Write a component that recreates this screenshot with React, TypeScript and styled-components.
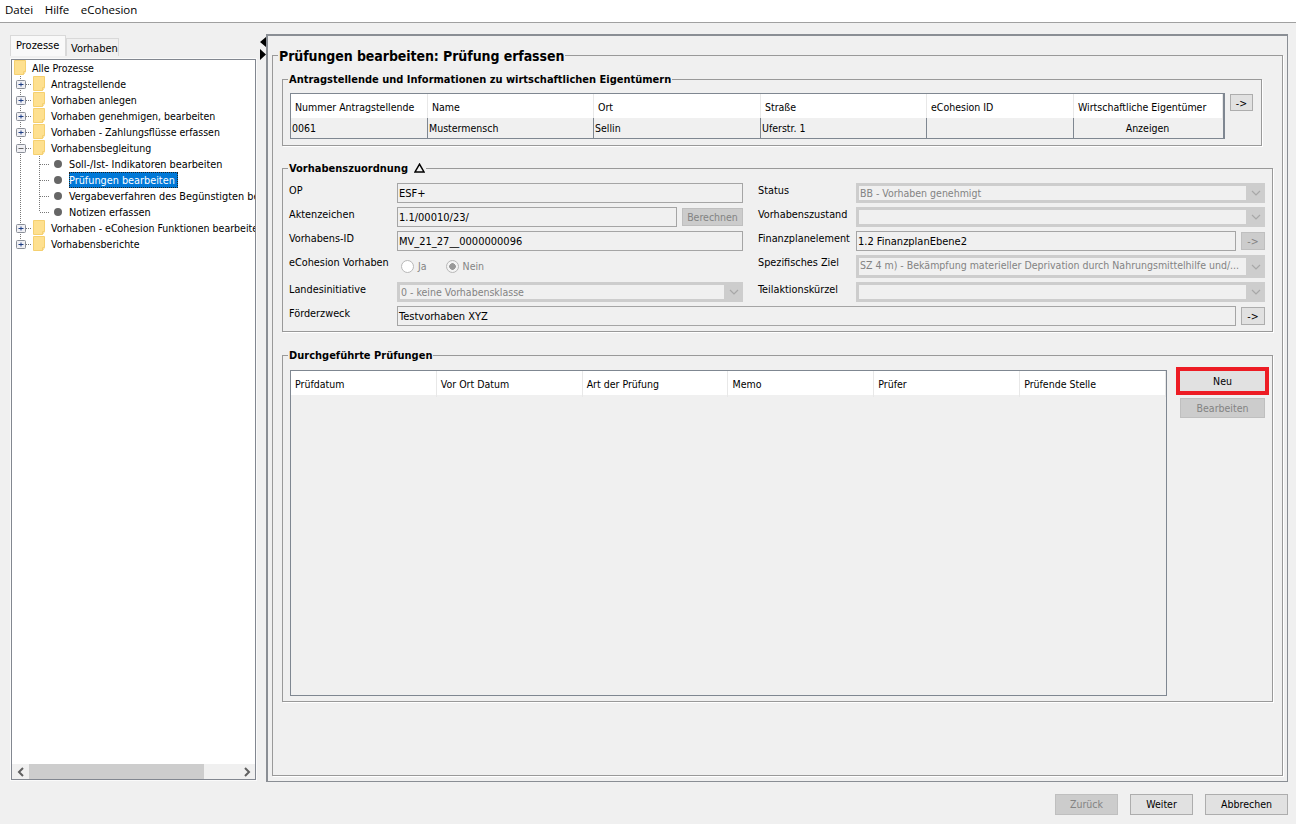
import styled, { createGlobalStyle } from "styled-components";

const GlobalStyle = createGlobalStyle`
  html, body {
    margin: 0;
    padding: 0;
    background: #f0f0f0;
  }
  body {
    font-family: "DejaVu Sans", "Noto Sans", sans-serif;
    font-stretch: condensed;
    font-size: 10.5px;
    color: #000;
    overflow: hidden;
  }
  * {
    box-sizing: border-box;
  }
`;

type TreeItem = {
  label: string;
  kind: "root" | "folder" | "child";
  state?: "plus" | "minus";
  last?: boolean;
  firstChild?: boolean;
  lastChild?: boolean;
  selected?: boolean;
};

const treeItems: TreeItem[] = [
  { label: "Alle Prozesse", kind: "root" },
  { label: "Antragstellende", kind: "folder", state: "plus" },
  { label: "Vorhaben anlegen", kind: "folder", state: "plus" },
  { label: "Vorhaben genehmigen, bearbeiten", kind: "folder", state: "plus" },
  { label: "Vorhaben - Zahlungsflüsse erfassen", kind: "folder", state: "plus" },
  { label: "Vorhabensbegleitung", kind: "folder", state: "minus" },
  { label: "Soll-/Ist- Indikatoren bearbeiten", kind: "child", firstChild: true },
  { label: "Prüfungen bearbeiten", kind: "child", selected: true },
  { label: "Vergabeverfahren des Begünstigten bearbeiten", kind: "child" },
  { label: "Notizen erfassen", kind: "child", lastChild: true },
  { label: "Vorhaben - eCohesion Funktionen bearbeiten", kind: "folder", state: "plus" },
  { label: "Vorhabensberichte", kind: "folder", state: "plus", last: true },
];

const Folder = () => (
  <svg width="12" height="16" viewBox="0 0 12 16">
    <path d="M.5.5h11v11h-2v3H.5z" fill="#fee08f" stroke="#f5d070" />
    <path d="M9.500 14.500l2-3" stroke="#f5d070" />
  </svg>
);

const Expander = ({ state }: { state: "plus" | "minus" }) => (
  <>
    <rect x="4.5" y="4.5" width="9" height="8" rx="1" fill="#f0f0f4" stroke="#8a8f98" />
    <path d="M6.500 8.500h5" stroke={state === "plus" ? "#1f3f85" : "#666"} />
    {state === "plus" && <path d="M9 6.500v4" stroke="#1f3f85" />}
  </>
);

const Dots = ({ d }: { d: string }) => <path d={d} stroke="#777" strokeDasharray="1 1" fill="none" />;

const FolderGutter = ({ item }: { item: TreeItem }) => (
  <svg width="21" height="16" viewBox="0 0 21 16">
    <Dots d={item.last ? "M8.500 0v4" : "M8.500 0v16"} />
    <Dots d="M14 8.500h6" />
    <Expander state={item.state ?? "plus"} />
  </svg>
);

const ChildGutter = ({ item }: { item: TreeItem }) => (
  <svg width="57" height="16" viewBox="0 0 57 16">
    <Dots d="M8.500 0v16" />
    <Dots d={item.lastChild ? "M27.500 0v8" : "M27.500 0v16"} />
    <Dots d="M28 8.500h10" />
    <circle cx="46" cy="8" r="4" fill="#666" />
  </svg>
);

const TreeRows = () => (
  <>
    {treeItems.map((item) => (
      <TreeRow key={item.label}>
        {item.kind === "root" && <RootIndent />}
        {item.kind === "folder" && <FolderGutter item={item} />}
        {item.kind === "child" && <ChildGutter item={item} />}
        {item.kind !== "child" && <Folder />}
        <TreeLabel $selected={item.selected} $kind={item.kind}>
          {item.label}
        </TreeLabel>
      </TreeRow>
    ))}
  </>
);

const Chevron = () => (
  <svg width="10" height="6" viewBox="0 0 10 6">
    <path d="M1 1l4 4 4-4" fill="none" stroke="#a8a8a8" strokeWidth="1.2" />
  </svg>
);

const DisabledSelect = ({ value, tall }: { value?: string; tall?: boolean }) => (
  <SelectBox $tall={tall}>
    <SelectValue>{value}</SelectValue>
    <SelectArrow>
      <Chevron />
    </SelectArrow>
  </SelectBox>
);

const applicantColumns = "137px 166px 167px 166px 147px 1fr";
const checkColumns = "repeat(6, 1fr)";

export default function App() {
  return (
    <Page>
      <GlobalStyle />
      <MenuBar>
        <span>Datei</span>
        <span>Hilfe</span>
        <span>eCohesion</span>
      </MenuBar>
      <Workspace>
        <Sidebar>
          <Tabs>
            <Tab $active>Prozesse</Tab>
            <Tab>Vorhaben</Tab>
          </Tabs>
          <TreePanel>
            <TreeBody>
              <TreeRows />
            </TreeBody>
            <ScrollBar>
              <ScrollArrow>
                <svg width="8" height="10" viewBox="0 0 8 10">
                  <path d="M6 1L2 5l4 4" fill="none" stroke="#606060" strokeWidth="2" />
                </svg>
              </ScrollArrow>
              <ScrollThumb />
              <ScrollArrow>
                <svg width="8" height="10" viewBox="0 0 8 10">
                  <path d="M2 1l4 4-4 4" fill="none" stroke="#606060" strokeWidth="2" />
                </svg>
              </ScrollArrow>
            </ScrollBar>
          </TreePanel>
        </Sidebar>
        <Splitter>
          <svg width="6" height="23" viewBox="0 0 6 23">
            <path d="M6 0v10L0 5zM0 12v11l6-5.500z" fill="#000" />
          </svg>
        </Splitter>
        <MainPanel>
          <PageGroup>
            <PageLegend>Prüfungen bearbeiten: Prüfung erfassen</PageLegend>
            <ApplicantGroup>
              <GroupLegend>Antragstellende und Informationen zu wirtschaftlichen Eigentümern</GroupLegend>
              <ApplicantContent>
                <ApplicantTable>
                  <HeaderRow $columns={applicantColumns}>
                    <HeaderCell>Nummer Antragstellende</HeaderCell>
                    <HeaderCell>Name</HeaderCell>
                    <HeaderCell>Ort</HeaderCell>
                    <HeaderCell>Straße</HeaderCell>
                    <HeaderCell>eCohesion ID</HeaderCell>
                    <HeaderCell>Wirtschaftliche Eigentümer</HeaderCell>
                  </HeaderRow>
                  <DataRow $columns={applicantColumns}>
                    <DataCell>0061</DataCell>
                    <DataCell>Mustermensch</DataCell>
                    <DataCell>Sellin</DataCell>
                    <DataCell>Uferstr. 1</DataCell>
                    <DataCell />
                    <DataCell $center>Anzeigen</DataCell>
                  </DataRow>
                </ApplicantTable>
                <SmallArrow>-&gt;</SmallArrow>
              </ApplicantContent>
            </ApplicantGroup>
            <AssignmentGroup>
              <GroupLegend>
                Vorhabenszuordnung{" "}
                <svg width="11" height="10" viewBox="0 0 11 10">
                  <path d="M5.500 1.200L10 9H1z" fill="none" stroke="#000" strokeWidth="1.500" />
                </svg>
              </GroupLegend>
              <FormGrid>
                <FieldLabel>OP</FieldLabel>
                <TextField>ESF+</TextField>
                <FieldLabel>Status</FieldLabel>
                <DisabledSelect value="BB - Vorhaben genehmigt" />

                <FieldLabel>Aktenzeichen</FieldLabel>
                <FieldWithButton>
                  <TextField>1.1/00010/23/</TextField>
                  <CalcButton disabled>Berechnen</CalcButton>
                </FieldWithButton>
                <FieldLabel>Vorhabenszustand</FieldLabel>
                <DisabledSelect />

                <FieldLabel>Vorhabens-ID</FieldLabel>
                <TextField>MV_21_27__0000000096</TextField>
                <FieldLabel>Finanzplanelement</FieldLabel>
                <FieldWithButton>
                  <TextField>1.2 FinanzplanEbene2</TextField>
                  <RowArrow disabled>-&gt;</RowArrow>
                </FieldWithButton>

                <FieldLabel>eCohesion Vorhaben</FieldLabel>
                <RadioGroup>
                  <RadioOption>
                    <RadioDot />
                    Ja
                  </RadioOption>
                  <RadioOption>
                    <RadioDot $checked />
                    Nein
                  </RadioOption>
                </RadioGroup>
                <FieldLabel>Spezifisches Ziel</FieldLabel>
                <DisabledSelect tall value="SZ 4 m) - Bekämpfung materieller Deprivation durch Nahrungsmittelhilfe und/..." />

                <FieldLabel>Landesinitiative</FieldLabel>
                <DisabledSelect value="0 - keine Vorhabensklasse" />
                <FieldLabel>Teilaktionskürzel</FieldLabel>
                <DisabledSelect />

                <FieldLabel>Förderzweck</FieldLabel>
                <WideField>
                  <TextField>Testvorhaben XYZ</TextField>
                  <RowArrow>-&gt;</RowArrow>
                </WideField>
              </FormGrid>
            </AssignmentGroup>
            <ChecksGroup>
              <GroupLegend>Durchgeführte Prüfungen</GroupLegend>
              <ChecksContent>
                <ChecksTable>
                  <HeaderRow $columns={checkColumns}>
                    <HeaderCell>Prüfdatum</HeaderCell>
                    <HeaderCell>Vor Ort Datum</HeaderCell>
                    <HeaderCell>Art der Prüfung</HeaderCell>
                    <HeaderCell>Memo</HeaderCell>
                    <HeaderCell>Prüfer</HeaderCell>
                    <HeaderCell>Prüfende Stelle</HeaderCell>
                  </HeaderRow>
                </ChecksTable>
                <ChecksActions>
                  <HighlightedButton>Neu</HighlightedButton>
                  <ActionButton disabled>Bearbeiten</ActionButton>
                </ChecksActions>
              </ChecksContent>
            </ChecksGroup>
          </PageGroup>
        </MainPanel>
      </Workspace>
      <Footer>
        <FooterButton disabled>Zurück</FooterButton>
        <FooterButton>Weiter</FooterButton>
        <FooterButton $wide>Abbrechen</FooterButton>
      </Footer>
    </Page>
  );
}

const Page = styled.div`
  width: 1296px;
  height: 824px;
  display: flex;
  flex-direction: column;
  overflow: hidden;
`;

const MenuBar = styled.div`
  height: 23px;
  flex: none;
  display: flex;
  align-items: center;
  gap: 11.5px;
  padding: 0 0 3px 5px;
  background: #fff;
  border-bottom: 1px solid #a0a0a0;
  font-family: "Open Sans", sans-serif;
  font-stretch: normal;
  font-size: 11.5px;
`;

const Workspace = styled.div`
  height: 759px;
  flex: none;
  display: flex;
`;

const Sidebar = styled.div`
  width: 248px;
  margin-left: 10px;
  padding-top: 12px;
  display: flex;
  flex-direction: column;
`;

const Tabs = styled.div`
  display: flex;
  align-items: flex-end;
  height: 21px;
`;

const Tab = styled.div<{ $active?: boolean }>`
  height: ${({ $active }) => ($active ? "21px" : "18px")};
  padding: ${({ $active }) => ($active ? "3px 5px 0" : "3px 4px 0")};
  width: ${({ $active }) => ($active ? "56px" : "53px")};
  background: ${({ $active }) => ($active ? "#f9f9f9" : "#f0f0f0")};
  border: 1px solid #d9d9d9;
  border-bottom: none;
  font-size: 11px;
  white-space: nowrap;
`;

const TreePanel = styled.div`
  width: 245px;
  height: 721px;
  margin: 3px 0 0 1px;
  display: flex;
  flex-direction: column;
  background: #fff;
  border: 1px solid #828790;
  box-shadow: 0 0 0 1px #fafafa;
  overflow: hidden;
`;

const TreeBody = styled.div`
  flex: 1;
  overflow: hidden;
`;

const TreeRow = styled.div`
  height: 16px;
  display: flex;
  align-items: center;
  white-space: nowrap;

  svg {
    flex: none;
    display: block;
  }
`;

const RootIndent = styled.span`
  width: 2px;
  flex: none;
`;

const TreeLabel = styled.span<{ $selected?: boolean; $kind: TreeItem["kind"] }>`
  margin-left: ${({ $kind }) => ($kind === "child" ? "0" : "5px")};
  padding: 1px ${({ $selected }) => ($selected ? "3px" : "1px")} 0 ${({ $kind }) => ($kind === "child" ? "0" : "1px")};
  line-height: 15px;
  font-size: ${({ $kind }) => ($kind === "child" ? "10.8px" : "10.5px")};
  color: ${({ $selected }) => ($selected ? "#fff" : "#000")};
  background: ${({ $selected }) => ($selected ? "#0078d7" : "transparent")};
  outline: ${({ $selected }) => ($selected ? "1px dotted #222" : "none")};
  outline-offset: -1px;
`;

const ScrollBar = styled.div`
  height: 15px;
  flex: none;
  display: flex;
  background: #f0f0f0;
`;

const ScrollArrow = styled.div`
  width: 17px;
  flex: none;
  display: flex;
  align-items: center;
  justify-content: center;
`;

const ScrollThumb = styled.div`
  width: 175px;
  margin-right: auto;
  background: #cdcdcd;
`;

const Splitter = styled.div`
  width: 8px;
  flex: none;
  padding: 14px 0 0 2px;

  svg {
    display: block;
  }
`;

const MainPanel = styled.div`
  width: 1022px;
  height: 748px;
  margin-top: 11px;
  padding: 9px 4px 5px 4px;
  background: #f0f0f0;
  border: 1px solid #8a8e94;
  border-width: 2px 1px 1px 2px;
`;

const FieldSet = styled.fieldset`
  margin: 0;
  padding: 0;
  min-width: 0;
  border: 1px solid #999;
  box-shadow: 1px 1px 0 #fff;
`;

const PageGroup = styled(FieldSet)`
  height: 100%;
  padding: 0 9px;
`;

const PageLegend = styled.legend`
  margin-left: -4px;
  padding: 2px 1px 0;
  font-size: 14px;
  line-height: 18px;
  letter-spacing: -0.08px;
  font-weight: bold;
`;

const GroupLegend = styled.legend`
  margin-left: -2px;
  padding: 2px 1px 0;
  font-size: 11px;
  line-height: 16px;
  font-weight: bold;

  svg {
    margin-left: 3px;
    vertical-align: -1px;
  }
`;

const ApplicantGroup = styled(FieldSet)`
  width: 980px;
  margin-top: 5px;
  padding: 5px 7px 6px;
`;

const ApplicantContent = styled.div`
  display: flex;
  align-items: flex-start;
  gap: 5px;
`;

const ApplicantTable = styled.div`
  width: 935px;
  height: 46px;
  border: 1px solid #7f8791;
  border-right-width: 2px;
`;

const HeaderRow = styled.div<{ $columns: string }>`
  height: 24px;
  display: grid;
  grid-template-columns: ${({ $columns }) => $columns};
  background: #fff;
`;

const HeaderCell = styled.div`
  padding: 1px 0 0 4px;
  line-height: 25px;
  border-right: 1px solid #e8e8e8;
  white-space: nowrap;
`;

const DataRow = styled.div<{ $columns: string }>`
  height: 20px;
  display: grid;
  grid-template-columns: ${({ $columns }) => $columns};
`;

const DataCell = styled.div<{ $center?: boolean }>`
  padding: 0 ${({ $center }) => ($center ? "3px" : "0")} 0 1px;
  line-height: 20px;
  text-align: ${({ $center }) => ($center ? "center" : "left")};
  border-right: 1px solid #7f8791;

  &:last-child {
    border-right: none;
  }
`;

const GreyButton = styled.button`
  margin: 0;
  padding: 0;
  font: inherit;
  font-stretch: inherit;
  color: #000;
  background: #e1e1e1;
  border: 1px solid #adadad;

  &:disabled {
    color: #838383;
    background: #ccc;
    border-color: #bfbfbf;
  }
`;

const SmallArrow = styled(GreyButton)`
  width: 23px;
  height: 17px;
  margin-top: 1px;
  line-height: 12px;
`;

const AssignmentGroup = styled(FieldSet)`
  width: 991px;
  height: 173px;
  margin-top: 13px;
  padding: 6px 7px 0;
`;

const FormGrid = styled.div`
  display: grid;
  margin-left: -1px;
  grid-template-columns: 108px 346px 113px 409px;
  grid-template-rows: 24px 24px 24px 27px 24px 24px;
  align-items: start;
`;

const FieldLabel = styled.label`
  padding-top: 1px;
  font-size: 10.8px;
  line-height: 14px;
  white-space: nowrap;

  &:nth-of-type(even) {
    margin-left: 15px;
  }
`;

const TextField = styled.div`
  flex: 1;
  height: 20px;
  padding-left: 1px;
  font-size: 11px;
  line-height: 20px;
  border: 1px solid #a5a5a5;
  white-space: nowrap;
`;

const FieldWithButton = styled.div`
  display: flex;
  gap: 5px;
`;

const WideField = styled(FieldWithButton)`
  grid-column: 2 / 5;
`;

const CalcButton = styled(GreyButton)`
  width: 61px;
  height: 18px;
  margin-top: 1px;
`;

const RowArrow = styled(GreyButton)`
  width: 24px;
  height: 18px;
  margin-top: 1px;
`;

const SelectBox = styled.div<{ $tall?: boolean }>`
  height: ${({ $tall }) => ($tall ? "23px" : "20px")};
  display: flex;
  background: #cdcdcd;
  padding: 3px 0 3px 3px;
  color: #838383;
`;

const SelectValue = styled.div`
  flex: 1;
  min-width: 0;
  padding-left: 1px;
  line-height: 14px;
  background: #f0f0f0;
  white-space: nowrap;
  overflow: hidden;
`;

const SelectArrow = styled.div`
  width: 19px;
  flex: none;
  display: flex;
  align-items: center;
  justify-content: center;
`;

const RadioGroup = styled.div`
  display: flex;
  gap: 19px;
  padding: 5px 0 0 4px;
  color: #838383;
`;

const RadioOption = styled.div`
  display: flex;
  align-items: center;
  gap: 4px;
  line-height: 13px;
`;

const RadioDot = styled.span<{ $checked?: boolean }>`
  width: 13px;
  height: 13px;
  border-radius: 50%;
  border: 1px solid #b8b8b8;
  background: ${({ $checked }) => ($checked ? "radial-gradient(circle, #999 0 3px, #f4f4f4 3.6px)" : "#fff")};
`;

const ChecksGroup = styled(FieldSet)`
  width: 991px;
  height: 356px;
  margin-top: 14px;
  padding: 6px 7px 0;
`;

const ChecksContent = styled.div`
  display: flex;
  align-items: flex-start;
`;

const ChecksTable = styled.div`
  width: 877px;
  height: 326px;
  border: 1px solid #7f8791;
`;

const ChecksActions = styled.div`
  width: 85px;
  margin: 1px 0 0 13px;
  display: flex;
  flex-direction: column;
  gap: 7px;
`;

const ActionButton = styled(GreyButton)`
  height: 20px;
`;

const HighlightedButton = styled(ActionButton)`
  outline: 4px solid #ed1c24;
  border-color: #e1e1e1;
`;

const Footer = styled.div`
  flex: 1;
  display: flex;
  justify-content: flex-end;
  gap: 12px;
  padding: 12px 8px 0 0;
`;

const FooterButton = styled(GreyButton)<{ $wide?: boolean }>`
  width: ${({ $wide }) => ($wide ? "83px" : "63px")};
  height: 21px;
  padding-bottom: 1px;
`;
